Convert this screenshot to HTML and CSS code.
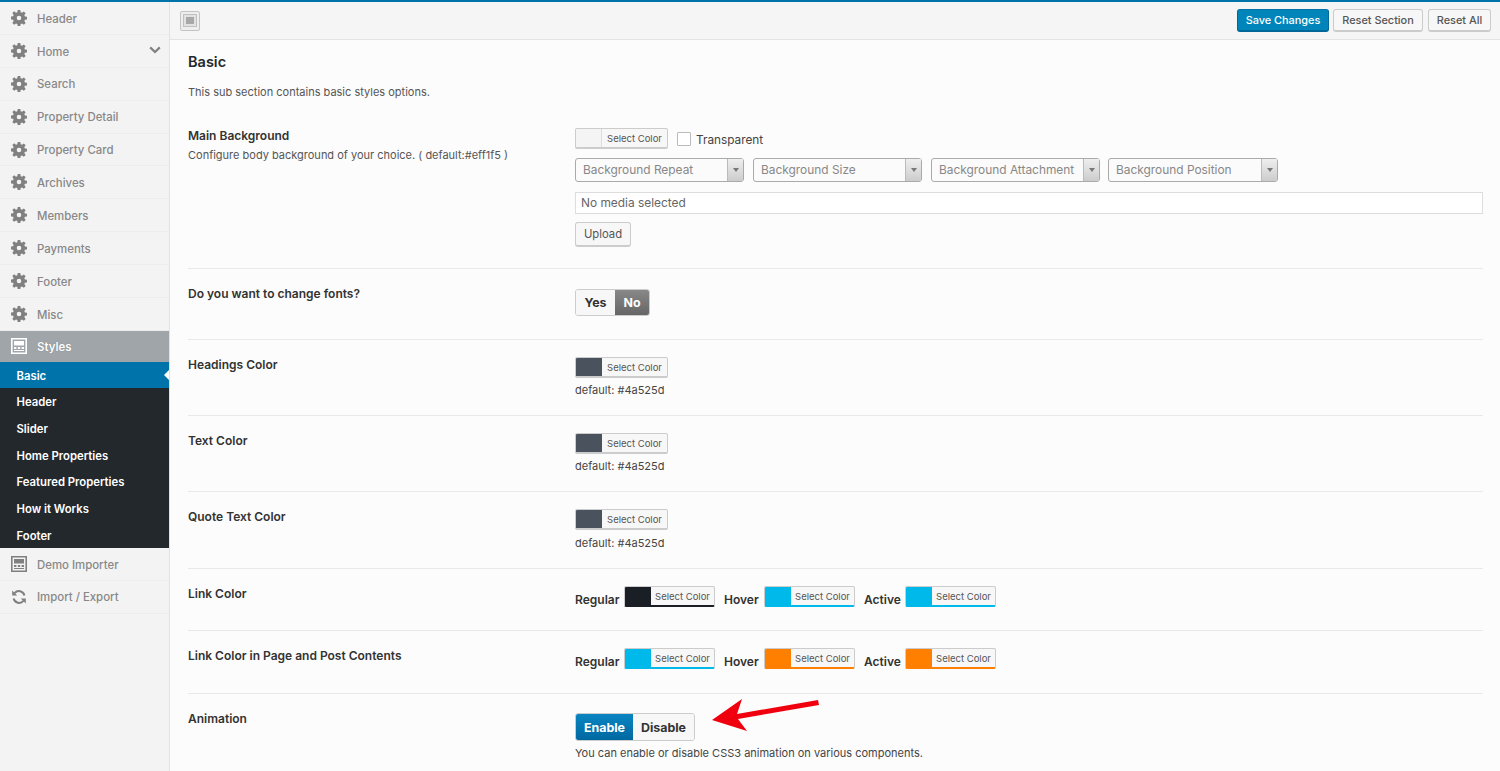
FILE: index.html
```html
<!DOCTYPE html>
<html lang="en">
<head>
<meta charset="utf-8">
<title>Basic styles</title>
<link rel="stylesheet" href="styles.css">
</head>
<body>
<svg class="defs" width="0" height="0" aria-hidden="true">
  <symbol id="gear" viewBox="0 0 16 16"><path fill-rule="evenodd" d="M6.7 0h2.6l.4 2.2 1.3.55 1.85-1.3 1.8 1.8-1.3 1.85.55 1.3 2.1.4v2.6l-2.1.4-.55 1.3 1.3 1.85-1.8 1.8-1.85-1.3-1.3.55-.4 2.2H6.7l-.4-2.2-1.3-.55-1.85 1.3-1.8-1.8 1.3-1.85-.55-1.3-2.1-.4V6.6l2.1-.4.55-1.3-1.3-1.85 1.8-1.8L5 2.75l1.3-.55zM8 5.7a2.3 2.3 0 1 0 0 4.6 2.3 2.3 0 0 0 0-4.6z"/></symbol>
  <symbol id="panel" viewBox="0 0 16 16"><path fill-rule="evenodd" d="M0 0h16v16H0zM1.6 1.6v12.8h12.8V1.6zM3 3h10v4.5H3zM3 9h2.4v2H3zm3.8 0h2.4v2H6.8zm3.8 0H13v2h-2.4zM3 12h10v1H3z"/></symbol>
</svg>
<div class="app">
  <nav class="sidebar">
    <a class="item"><svg class="ico"><use href="#gear"/></svg>Header</a>
    <a class="item"><svg class="ico"><use href="#gear"/></svg>Home<svg class="chev" viewBox="0 0 12 8"><path d="M1.2 1.4 6 6l4.8-4.6" fill="none" stroke="currentColor" stroke-width="2.2"/></svg></a>
    <a class="item"><svg class="ico"><use href="#gear"/></svg>Search</a>
    <a class="item"><svg class="ico"><use href="#gear"/></svg>Property Detail</a>
    <a class="item"><svg class="ico"><use href="#gear"/></svg>Property Card</a>
    <a class="item"><svg class="ico"><use href="#gear"/></svg>Archives</a>
    <a class="item"><svg class="ico"><use href="#gear"/></svg>Members</a>
    <a class="item"><svg class="ico"><use href="#gear"/></svg>Payments</a>
    <a class="item"><svg class="ico"><use href="#gear"/></svg>Footer</a>
    <a class="item"><svg class="ico"><use href="#gear"/></svg>Misc</a>
    <a class="item item-open"><svg class="ico"><use href="#panel"/></svg>Styles</a>
    <div class="submenu">
      <a class="sub sub-active">Basic</a>
      <a class="sub">Header</a>
      <a class="sub">Slider</a>
      <a class="sub">Home Properties</a>
      <a class="sub">Featured Properties</a>
      <a class="sub">How it Works</a>
      <a class="sub">Footer</a>
    </div>
    <a class="item"><svg class="ico"><use href="#panel"/></svg>Demo Importer</a>
    <a class="item"><svg class="ico" viewBox="0 0 16 16"><path d="M13.4 6.4A5.6 5.6 0 0 0 3.6 4.2M2.6 9.6a5.6 5.6 0 0 0 9.8 2.2" fill="none" stroke="currentColor" stroke-width="2"/><path d="M1.2 1.6v5h5zM14.8 14.4v-5h-5z"/></svg>Import / Export</a>
  </nav>

  <main class="main">
    <header class="topbar">
      <span class="layout-btn"><span class="layout-inner"><span class="layout-core"></span></span></span>
      <div class="actions">
        <button class="btn btn-primary">Save Changes</button>
        <button class="btn btn-section">Reset Section</button>
        <button class="btn btn-all">Reset All</button>
      </div>
    </header>

    <div class="content">
      <h2 class="title">Basic</h2>
      <p class="intro">This sub section contains basic styles options.</p>

      <section class="row row-bg">
        <div class="label"><h3>Main Background</h3><p>Configure body background of your choice. ( default:#eff1f5 )</p></div>
        <div class="field">
          <div class="line">
            <span class="picker"><i class="sw sw-empty"></i><b>Select Color</b></span>
            <span class="check"></span><span class="check-label">Transparent</span>
          </div>
          <div class="selects">
            <span class="select s1">Background Repeat<i></i></span>
            <span class="select s2">Background Size<i></i></span>
            <span class="select s3">Background Attachment<i></i></span>
            <span class="select s4">Background Position<i></i></span>
          </div>
          <div class="media">No media selected</div>
          <button class="btn upload">Upload</button>
        </div>
      </section>

      <section class="row row-fonts">
        <div class="label"><h3>Do you want to change fonts?</h3></div>
        <div class="field">
          <div class="toggle toggle-fonts"><span class="opt yes">Yes</span><span class="opt no">No</span></div>
        </div>
      </section>

      <section class="row row-color">
        <div class="label"><h3>Headings Color</h3></div>
        <div class="field"><span class="picker p-slate"><i class="sw"></i><b>Select Color</b></span><p class="hint">default: #4a525d</p></div>
      </section>
      <section class="row row-color">
        <div class="label"><h3>Text Color</h3></div>
        <div class="field"><span class="picker p-slate"><i class="sw"></i><b>Select Color</b></span><p class="hint">default: #4a525d</p></div>
      </section>
      <section class="row row-color row-quote">
        <div class="label"><h3>Quote Text Color</h3></div>
        <div class="field"><span class="picker p-slate"><i class="sw"></i><b>Select Color</b></span><p class="hint">default: #4a525d</p></div>
      </section>

      <section class="row row-link">
        <div class="label"><h3>Link Color</h3></div>
        <div class="field triple">
          <span class="cap c1">Regular</span><span class="picker p-dark"><i class="sw"></i><b>Select Color</b></span>
          <span class="cap c2">Hover</span><span class="picker p-blue"><i class="sw"></i><b>Select Color</b></span>
          <span class="cap c3">Active</span><span class="picker p-blue"><i class="sw"></i><b>Select Color</b></span>
        </div>
      </section>
      <section class="row row-link">
        <div class="label"><h3>Link Color in Page and Post Contents</h3></div>
        <div class="field triple">
          <span class="cap c1">Regular</span><span class="picker p-blue"><i class="sw"></i><b>Select Color</b></span>
          <span class="cap c2">Hover</span><span class="picker p-orange"><i class="sw"></i><b>Select Color</b></span>
          <span class="cap c3">Active</span><span class="picker p-orange"><i class="sw"></i><b>Select Color</b></span>
        </div>
      </section>

      <section class="row row-anim">
        <div class="label"><h3>Animation</h3></div>
        <div class="field">
          <div class="toggle toggle-anim"><span class="opt enable">Enable</span><span class="opt disable">Disable</span></div>
          <p class="hint hint-anim">You can enable or disable CSS3 animation on various components.</p>
        </div>
      </section>
    </div>
  </main>
</div>
<svg class="arrow" viewBox="0 0 120 40" width="120" height="40" aria-hidden="true"><polygon fill="#f0000f" points="2,24 32,3 27,18 108,4 109,9 28,23 37,35"/></svg>
</body>
</html>
```

FILE: styles.css
```css
* { box-sizing: border-box; }
html, body { margin: 0; height: 771px; overflow: hidden; }
body { background: #fcfcfc; font-family: Inter, "Liberation Sans", sans-serif; font-size: 11.5px; color: #444; border-top: 2px solid #0073aa; position: relative; -webkit-font-smoothing: antialiased; }
.defs { position: absolute; }
.app { display: flex; height: 769px; }

.sidebar { width: 170px; flex: none; background: #f3f3f3; border-right: 1px solid #e2e2e2; }
.item { display: flex; align-items: center; height: 32.9px; padding: 1.5px 0 0 11px; border-bottom: 1px solid #ececec; color: #888; font-weight: 500; font-size: 11.4px; position: relative; }
.ico { width: 16px; height: 16px; margin: -1.5px 10px 0 0; fill: #808080; color: #808080; flex: none; }
.chev { width: 12px; height: 8px; position: absolute; right: 8px; top: 11px; color: #808080; }
.item-open { background: #a0a5aa; color: #fff; height: 31px; border-bottom: 0; font-weight: 600; text-shadow: 0 0 1px rgba(0,0,0,.3); }
.item-open .ico { fill: #fff; }
.submenu { background: #23282d; height: 186px; }
.sub { display: flex; align-items: center; height: 26.67px; padding: 2px 0 0 16.5px; color: #fff; font-weight: 600; font-size: 11.3px; }
.sub-active { background: #0073aa; position: relative; height: 26px; }
.sub-active::after { content: ""; position: absolute; right: 0; top: 8px; border: 5px solid transparent; border-left: 0; border-right: 5px solid #fff; }

.main { flex: 1; min-width: 0; }
.topbar { height: 38px; background: #f5f5f5; border-bottom: 1px solid #e3e3e3; display: flex; align-items: center; padding: 0 9px 0 10px; justify-content: space-between; }
.layout-btn { width: 20px; height: 20px; border: 1px solid #c4c4c4; border-radius: 2px; background: #eee; display: flex; align-items: center; justify-content: center; }
.layout-inner { width: 14px; height: 13px; background: #e2e2e2; border: 1px solid #c0c0c0; display: flex; align-items: center; justify-content: center; }
.layout-core { width: 8px; height: 7px; background: #a8a8a8; }
.actions { display: flex; gap: 4px; }
.btn { height: 23px; padding: 0; font: 500 10.9px Inter, "Liberation Sans", sans-serif; color: #555; background: #f7f7f7; border: 1px solid #ccc; border-bottom-width: 2px; border-radius: 3px; }
.btn-primary { color: #fff; background: #0085ba; border-color: #0073aa #006799 #006799; width: 92px; }
.btn-section { width: 90px; }
.btn-all { width: 63px; margin-left: 1px; }

.content { padding: 0 17px 0 18px; }
.title { margin: 0; padding-top: 13px; font-size: 14.5px; font-weight: 600; line-height: 18px; color: #23282d; }
.intro { margin: 13px 0 0; font-size: 11px; line-height: 16px; color: #555; }

.row { display: flex; border-bottom: 1px solid #e9e9e9; }
.label { width: 387px; flex: none; }
.label h3 { margin: 0; font-size: 12px; font-weight: 600; line-height: 16px; color: #333; }
.label p { margin: 3px 0 0; font-size: 11px; line-height: 16px; color: #555; }
.field { flex: 1; min-width: 0; }

.row-bg { height: 169px; padding-top: 28px; }
.line { display: flex; align-items: center; height: 21px; }
.picker { display: inline-flex; width: 93px; height: 21px; border: 1px solid #ccc; border-bottom-width: 2px; border-radius: 2px; background: #f7f7f7; overflow: hidden; flex: none; }
.picker i { width: 26px; flex: none; background: #f4f4f4; border-right: 1px solid #ddd; }
.picker b { flex: 1; text-align: center; font-weight: 400; font-size: 9.5px; line-height: 19px; color: #555; }
.check { width: 14px; height: 14px; border: 1px solid #bbb; background: #fff; margin: 0 5px 0 9px; border-radius: 1px; }
.check-label { font-size: 11.8px; color: #444; padding-top: 2px; }
.selects { display: flex; gap: 9px; margin-top: 9px; }
.select { position: relative; height: 24px; border: 1px solid #aaa; border-radius: 3px; background: #fbfbfb; color: #888; font-size: 11.9px; line-height: 22px; padding-left: 7px; }
.s1 { width: 169px; } .s2 { width: 169px; } .s3 { width: 169px; } .s4 { width: 170px; margin-left: -1px; }
.select i { position: absolute; right: 0; top: 0; bottom: 0; width: 16px; background: linear-gradient(#eee, #ccc); border-left: 1px solid #bbb; }
.select i::after { content: ""; position: absolute; left: 5px; top: 9px; border: 3px solid transparent; border-top: 4px solid #777; border-bottom: 0; }
.media { margin-top: 10px; height: 22px; border: 1px solid #ddd; background: #fff; font-size: 11.9px; line-height: 20px; padding-left: 5px; color: #666; }
.upload { display: block; margin-top: 8px; width: 56px; height: 25px; font-size: 11.3px; font-weight: 400; }

.row-fonts { height: 71px; padding-top: 17px; }
.toggle { display: inline-flex; height: 28px; border: 1px solid #ccc; border-radius: 3px; overflow: hidden; margin-top: 3px; font-size: 12.4px; font-weight: 700; }
.toggle-fonts { height: 27px; }
.opt { display: flex; align-items: center; justify-content: center; background: #f7f7f7; color: #333; }
.yes { width: 39px; }
.no { width: 34px; color: #fff; background: linear-gradient(#888, #666); }
.enable { width: 57px; color: #fff; background: linear-gradient(#0a85c2, #0068a0); }
.disable { width: 61px; }

.row-color { height: 76px; padding-top: 17px; }
.row-quote { height: 77px; }
.row-quote .hint { margin-top: 4px; }
.hint { margin: 3px 0 0; font-size: 11px; line-height: 16px; color: #444; }
.p-slate i { background: #4a525d; border-right: 0; }

.row-link { height: 62px; padding-top: 17px; }
.row-link + .row-link { height: 63px; }
.triple { display: flex; align-items: flex-start; }
.cap { font-size: 12px; font-weight: 600; color: #333; line-height: 18px; padding-top: 5px; }
.c1 { width: 49px; }
.c2 { width: 40px; margin-left: 9px; }
.c3 { width: 41px; margin-left: 9px; }
.triple .picker { width: 91px; }
.p-dark i { background: #1a1e25; border-right: 0; } .p-dark { border-bottom-color: #1a1e25; }
.p-blue i { background: #00b9eb; border-right: 0; } .p-blue { border-bottom-color: #00b9eb; }
.p-orange i { background: #ff7f00; border-right: 0; } .p-orange { border-bottom-color: #ff7f00; }

.row-anim { border-bottom: 0; padding-top: 17px; }
.toggle-anim { margin-top: 2px; }
.hint-anim { margin-top: 4px; }

.arrow { position: absolute; left: 710px; top: 694px; }
```
